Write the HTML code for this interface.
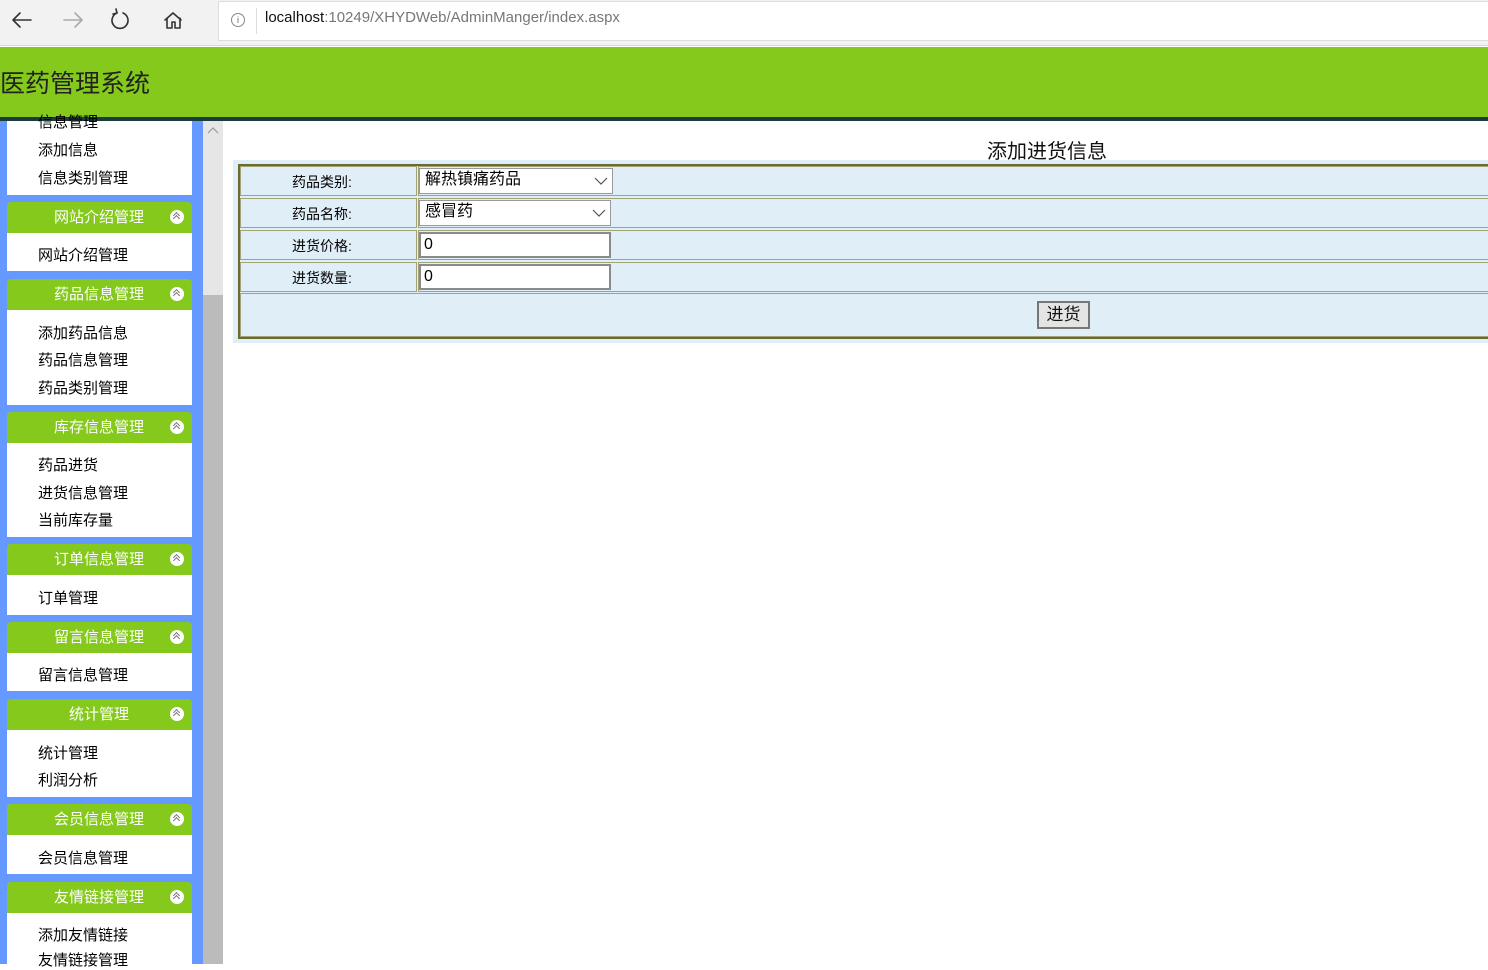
<!DOCTYPE html>
<html><head><meta charset="utf-8"><style>
*{margin:0;padding:0;box-sizing:border-box}
body{width:1488px;height:964px;overflow:hidden;position:relative;background:#fff;font-family:"Liberation Sans","Noto Sans CJK SC",sans-serif}
.a{position:absolute}
.hd{position:absolute;left:7px;width:185px;height:31px;background:#84c91c;border-radius:4px 4px 0 0;color:#fff;font-size:15px;line-height:31px;padding-left:47px}
.hd i{position:absolute;right:8px;top:8px;width:14px;height:14px;border-radius:50%;background:#fff}
.hd i:before{content:"";position:absolute;left:4px;top:6px;width:4px;height:4px;border-left:1px solid #777;border-top:1px solid #777;transform:rotate(45deg)}
.hd i:after{content:"";position:absolute;left:4px;top:3px;width:4px;height:4px;border-left:1px solid #777;border-top:1px solid #777;transform:rotate(45deg)}
.wb{position:absolute;left:7px;width:185px;background:#fff}
.it{position:absolute;left:38px;font-size:15px;color:#000;line-height:18px}
.lab{position:absolute;left:240px;width:177px;height:30px;background:#e0eef8;font-size:14px;line-height:30px;padding-left:51px;color:#000;border:1px solid #a3a37a}
.val{position:absolute;left:418px;width:1080px;height:30px;background:#e0eef8;border:1px solid #a3a37a}
.in{position:absolute;background:#fff;border:2px solid #8a8a8a;font-size:16px;line-height:22px;padding-left:3px;color:#000}
</style></head><body>
<div class="a" style="left:0;top:0;width:1488px;height:46px;background:#f2f2f2;border-bottom:1px solid #d8d8d8"></div>
<svg class="a" style="left:0;top:0" width="200" height="42"><g fill="none" stroke-width="1.6" stroke-linecap="round" stroke-linejoin="round"><path d="M31 20H13M20 13l-7 7 7 7" stroke="#333"/><path d="M64 20h18M75 13l7 7-7 7" stroke="#aaa"/><path d="M117 13a8 8 0 1 0 6 0" stroke="#333"/><path d="M117 13l-1-4M117 13l-4 1" stroke="#333"/><path d="M165 20l8-7 8 7M167 18v10h5v-6h3v6h5V18" stroke="#333"/></g></svg>
<div class="a" style="left:218px;top:1px;width:1280px;height:40px;background:#fff;border:1px solid #ddd"></div>
<div class="a" style="left:231px;top:13px;width:14px;height:14px;border:1px solid #888;border-radius:50%;font-size:9px;line-height:12px;text-align:center;color:#666">i</div>
<div class="a" style="left:256px;top:8px;width:1px;height:26px;background:#ddd"></div>
<div class="a" style="left:265px;top:9px;font-size:15px;color:#777"><span style="color:#111">localhost</span>:10249/XHYDWeb/AdminManger/index.aspx</div>
<div class="a" style="left:0;top:47px;width:1488px;height:71px;background:#84c91c"></div>
<div class="a" style="left:0;top:68px;font-size:25px;color:#222;line-height:32px">医药管理系统</div>
<div class="a" style="left:0;top:117px;width:1488px;height:4px;background:#1c3c3c"></div>
<div class="a" style="left:0;top:121px;width:203px;height:843px;background:#6699ff"></div>
<div class="a" style="left:203px;top:121px;width:20px;height:843px;background:#e6e6e6"></div>
<div class="a" style="left:203px;top:295px;width:20px;height:669px;background:#bbb"></div>
<svg class="a" style="left:206px;top:126px" width="14" height="10"><path d="M2 7l5-5 5 5" fill="none" stroke="#999" stroke-width="1.2"/></svg>
<div class="wb" style="top:121px;height:74px"></div>
<div class="it" style="top:114px">信息管理</div>
<div class="it" style="top:142px">添加信息</div>
<div class="it" style="top:170px">信息类别管理</div>
<div class="hd" style="top:202px">网站介绍管理<i></i></div>
<div class="wb" style="top:233px;height:38px"></div><div class="it" style="top:247px">网站介绍管理</div>
<div class="hd" style="top:279px">药品信息管理<i></i></div>
<div class="wb" style="top:310px;height:95px"></div>
<div class="it" style="top:325px">添加药品信息</div><div class="it" style="top:352px">药品信息管理</div><div class="it" style="top:380px">药品类别管理</div>
<div class="hd" style="top:412px">库存信息管理<i></i></div>
<div class="wb" style="top:443px;height:94px"></div>
<div class="it" style="top:457px">药品进货</div><div class="it" style="top:485px">进货信息管理</div><div class="it" style="top:512px">当前库存量</div>
<div class="hd" style="top:544px">订单信息管理<i></i></div>
<div class="wb" style="top:575px;height:40px"></div><div class="it" style="top:590px">订单管理</div>
<div class="hd" style="top:622px">留言信息管理<i></i></div>
<div class="wb" style="top:653px;height:38px"></div><div class="it" style="top:667px">留言信息管理</div>
<div class="hd" style="top:699px;padding-left:62px">统计管理<i></i></div>
<div class="wb" style="top:730px;height:67px"></div>
<div class="it" style="top:745px">统计管理</div><div class="it" style="top:772px">利润分析</div>
<div class="hd" style="top:804px">会员信息管理<i></i></div>
<div class="wb" style="top:835px;height:39px"></div><div class="it" style="top:850px">会员信息管理</div>
<div class="hd" style="top:882px">友情链接管理<i></i></div>
<div class="wb" style="top:913px;height:51px"></div>
<div class="it" style="top:927px">添加友情链接</div><div class="it" style="top:952px">友情链接管理</div>

<div class="a" style="left:987px;top:135px;font-size:20px;color:#111">添加进货信息</div>
<div class="a" style="left:233px;top:160px;width:1260px;height:183px;background:#e0eef8"></div>
<div class="a" style="left:238px;top:164px;width:1260px;height:175px;border:2px solid #6b6b30;border-right:none;background:#e0eef8"></div>
<div class="lab" style="top:166px">药品类别:</div><div class="val" style="top:166px"></div>
<div class="lab" style="top:198px">药品名称:</div><div class="val" style="top:198px"></div>
<div class="lab" style="top:230px">进货价格:</div><div class="val" style="top:230px"></div>
<div class="lab" style="top:262px">进货数量:</div><div class="val" style="top:262px"></div>
<div class="a" style="left:240px;top:293px;width:1260px;height:44px;border:1px solid #a3a37a;border-right:none"></div>
<div class="in" style="left:419px;top:168px;width:194px;height:26px;border:1px solid #999;padding-left:5px">解热镇痛药品<svg class="a" style="right:4px;top:7px" width="14" height="10"><path d="M1 2l6 6 6-6" fill="none" stroke="#555" stroke-width="1.2"/></svg></div>
<div class="in" style="left:419px;top:200px;width:192px;height:26px;border:1px solid #999;padding-left:5px">感冒药<svg class="a" style="right:4px;top:7px" width="14" height="10"><path d="M1 2l6 6 6-6" fill="none" stroke="#555" stroke-width="1.2"/></svg></div>
<div class="in" style="left:419px;top:232px;width:192px;height:26px">0</div>
<div class="in" style="left:419px;top:264px;width:192px;height:26px">0</div>
<div class="a" style="left:1037px;top:301px;width:53px;height:28px;background:#e4e4e4;border:2px solid #777;font-size:17px;line-height:24px;text-align:center;color:#111">进货</div>
</body></html>
